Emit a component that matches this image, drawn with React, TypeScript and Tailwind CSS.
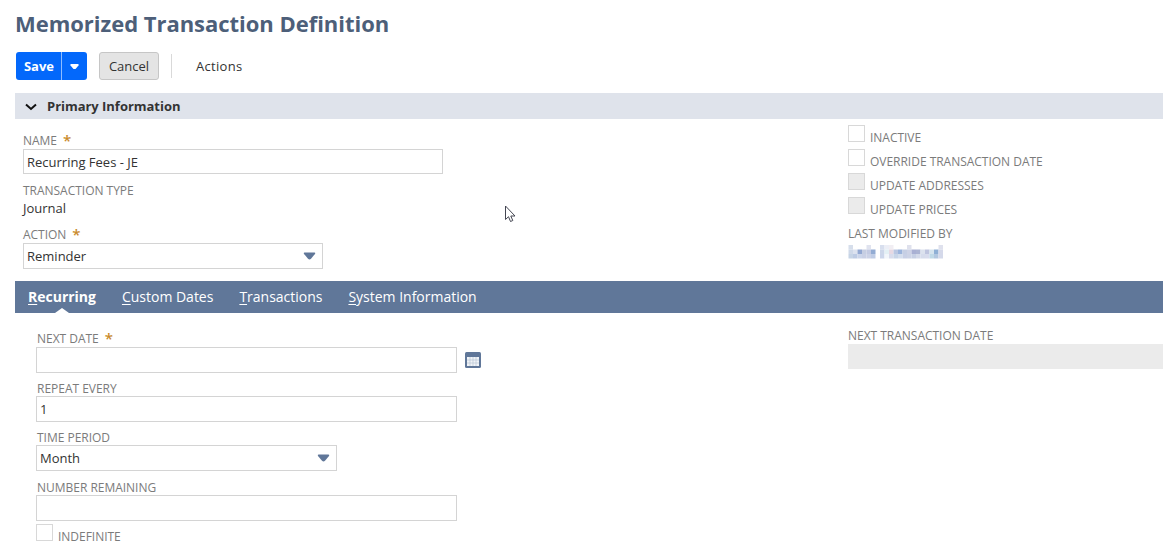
import type { ReactNode } from "react";

function Label({ required, className = "", children }: { required?: boolean; className?: string; children: ReactNode }) {
  return (
    <div className={`flex h-4 items-center whitespace-nowrap text-[12px] leading-4 tracking-[-0.02px] text-[#7b7b7b] ${className}`}>
      {children}
      {required && <span className="-mt-0.5 ml-[6px] text-[15px] font-semibold text-[#c98a2b]">*</span>}
    </div>
  );
}

function Field({ className = "", children }: { className?: string; children?: ReactNode }) {
  return (
    <div className={`flex items-center border border-[#d4d4d4] bg-white pt-0.5 pl-[3px] text-[13px] text-[#333] ${className}`}>
      {children}
    </div>
  );
}

function Caret() {
  return (
    <svg className="mr-[6px] mb-0.5 ml-auto" width="13" height="8" viewBox="0 0 13 8">
      <path d="M1.500 .5h10q1.200.2.500 1.400L8 6.800q-1.500 1.200-3 0L1 1.900Q.3.700 1.500.5z" fill="#607799" />
    </svg>
  );
}

function Check({ disabled, children }: { disabled?: boolean; children: ReactNode }) {
  return (
    <div className="flex h-6">
      <div className={`size-[17px] border border-[#d8d8d8] ${disabled ? "bg-[#ebebeb]" : "bg-white"}`} />
      <Label className="mt-[5px] ml-[5px]">{children}</Label>
    </div>
  );
}

function Tab({ k, rest }: { k: string; rest: string }) {
  return (
    <span className="whitespace-nowrap">
      <span className="underline underline-offset-2">{k}</span>
      {rest}
    </span>
  );
}

const nameMosaic = [
  ["#d6deeb", "", "", "", "#e0e3ef", "", "", "#d8dfee", "#eceef6", "#f1eef3", "", "", "", "#dfe1ed", "", "", "", "", "", "", "#dfe1ed"],
  ["#cfd9e9", "#dce2ef", "#93a8d2", "#c6cee2", "#c3cae2", "#93acd3", "", "#cdd7ea", "#e3f0f5", "#e7d9e3", "#bac7e2", "#9cb4dc", "#c6cfe4", "#ced3e6", "#a9b0d3", "#acb4d3", "#dce2ee", "#bfc5df", "#d5e4ee", "#8fb0d5", "#d5d9ea"],
  ["#c6d4e6", "#bdcbe4", "#cbd5ea", "#c9d0e5", "#cbd2e6", "#bfcce5", "", "#ccd6eb", "#f2f6fb", "#d8dcec", "#c8d5e8", "#d4deed", "#c8d0e6", "#ccd3e6", "#c6cfe4", "#d3d9e9", "#d6dcec", "#d8dced", "#bfd9e7", "#b2c7e0", "#d4d9ea"],
];

function MaskedName() {
  return (
    <svg className="mt-[3px]" width="95" height="14" viewBox="0 0 95 14">
      {nameMosaic.map((row, y) =>
        row.map((fill, x) => fill && <rect key={`${x}-${y}`} x={0.5 + x * 4.5} y={y * 4.5} width="4.5" height="4.5" fill={fill} />),
      )}
    </svg>
  );
}

export default function App() {
  return (
    <div className="relative h-[558px] w-[1165px] overflow-hidden bg-white pl-[15px] font-['Open_Sans',sans-serif] text-[13px] text-[#333]">
      <h1 className="h-[52px] pt-[7px] text-[22px] leading-8 font-bold tracking-[-0.03px] whitespace-nowrap text-[#4d5f79]">
        Memorized Transaction Definition
      </h1>
      <div className="flex h-[41px] pl-px">
        <div className="flex h-7 rounded-[3px] bg-[#0368fb]">
          <span className="flex w-[46px] items-center justify-center border-r border-[#8fbcff] pt-px pl-px font-bold text-white">Save</span>
          <span className="flex w-[25px] items-center justify-center">
            <svg className="mt-px" width="9" height="6" viewBox="0 0 9 6">
              <path d="M.5 0h8v1.500L5.500 5h-2L.5 1.500z" fill="#fff" />
            </svg>
          </span>
        </div>
        <span className="ml-3 flex h-7 w-[60px] items-center justify-center rounded-[3px] border border-[#c6c6c6] bg-[#e4e4e4] pt-0.5">
          Cancel
        </span>
        <span className="mt-0.5 ml-3 h-6 w-px bg-[#d9d9d9]" />
        <span className="ml-6 flex h-7 items-center pt-0.5 tracking-[0.3px]">Actions</span>
      </div>

      <div className="flex h-[26px] w-[1148px] items-center bg-[#dfe3eb] font-bold">
        <svg className="mt-px mr-[10px] ml-[10px]" width="12" height="8" viewBox="0 0 12 8">
          <path d="M1 1.500l5 4.500 5-4.500" fill="none" stroke="#111" strokeWidth="2" />
        </svg>
        <span className="pt-0.5 tracking-[-0.03px]">Primary Information</span>
      </div>

      <div className="flex h-[162px]">
        <div className="w-[825px] pt-[14px] pl-2">
          <Label required>NAME</Label>
          <Field className="h-[25px] w-[420px]">Recurring Fees - JE</Field>
          <Label className="mt-[9px]">TRANSACTION TYPE</Label>
          <div className="h-4 leading-[18px]">Journal</div>
          <Label required className="mt-3">ACTION</Label>
          <Field className="h-[26px] w-[300px]">
            Reminder
            <Caret />
          </Field>
        </div>
        <div className="w-[315px] pt-[6px] pl-2">
          <Check>INACTIVE</Check>
          <Check>OVERRIDE TRANSACTION DATE</Check>
          <Check disabled>UPDATE ADDRESSES</Check>
          <Check disabled>UPDATE PRICES</Check>
          <Label className="mt-[5px]">LAST MODIFIED BY</Label>
          <MaskedName />
        </div>
      </div>

      <nav className="relative flex h-8 w-[1148px] items-center gap-[26px] bg-[#607799] pb-0.5 pl-[13px] text-[14px] tracking-[-0.01px] text-white">
        <b><Tab k="R" rest="ecurring" /></b>
        <Tab k="C" rest="ustom Dates" />
        <Tab k="T" rest="ransactions" />
        <Tab k="S" rest="ystem Information" />
        <svg className="absolute bottom-0 left-10" width="14" height="5" viewBox="0 0 14 5">
          <path d="M0 5L7 0l7 5z" fill="#fff" />
        </svg>
      </nav>

      <div className="flex">
        <div className="w-[833px] pt-[18px] pl-[21px]">
          <Label required className="pl-px">NEXT DATE</Label>
          <div className="flex items-center gap-2">
            <Field className="h-[26px] w-[421px]" />
            <svg className="mb-px" width="16" height="16" viewBox="0 0 16 16">
              <rect width="16" height="16" rx="1.500" fill="#607799" />
              <rect x="2" y="5" width="12" height="9" fill="#f1f4f8" />
              <path d="M5 5v9M8 5v9M11 5v9M2 8h12M2 11h12" stroke="#b9c5d5" strokeWidth=".7" />
            </svg>
          </div>
          <Label className="mt-2 pl-px">REPEAT EVERY</Label>
          <Field className="-mt-px h-[26px] w-[421px] pl-1">1</Field>
          <Label className="mt-2 pl-px">TIME PERIOD</Label>
          <Field className="-mt-px h-[26px] w-[301px] pl-1">
            Month
            <Caret />
          </Field>
          <Label className="mt-[9px] pl-px">NUMBER REMAINING</Label>
          <Field className="-mt-px mb-[3px] h-[26px] w-[421px]" />
          <Check>INDEFINITE</Check>
        </div>
        <div className="pt-[15px]">
          <Label>NEXT TRANSACTION DATE</Label>
          <div className="h-[25px] w-[315px] bg-[#ebebeb]" />
        </div>
      </div>

      <svg className="absolute top-[205px] left-[504px]" width="12" height="18" viewBox="0 0 12 18">
        <path d="M1.500 1v13.500l3-2.800 2 4.800 2.300-1-2-4.500H11z" fill="#fff" stroke="#444652" strokeWidth="1" />
      </svg>
    </div>
  );
}
